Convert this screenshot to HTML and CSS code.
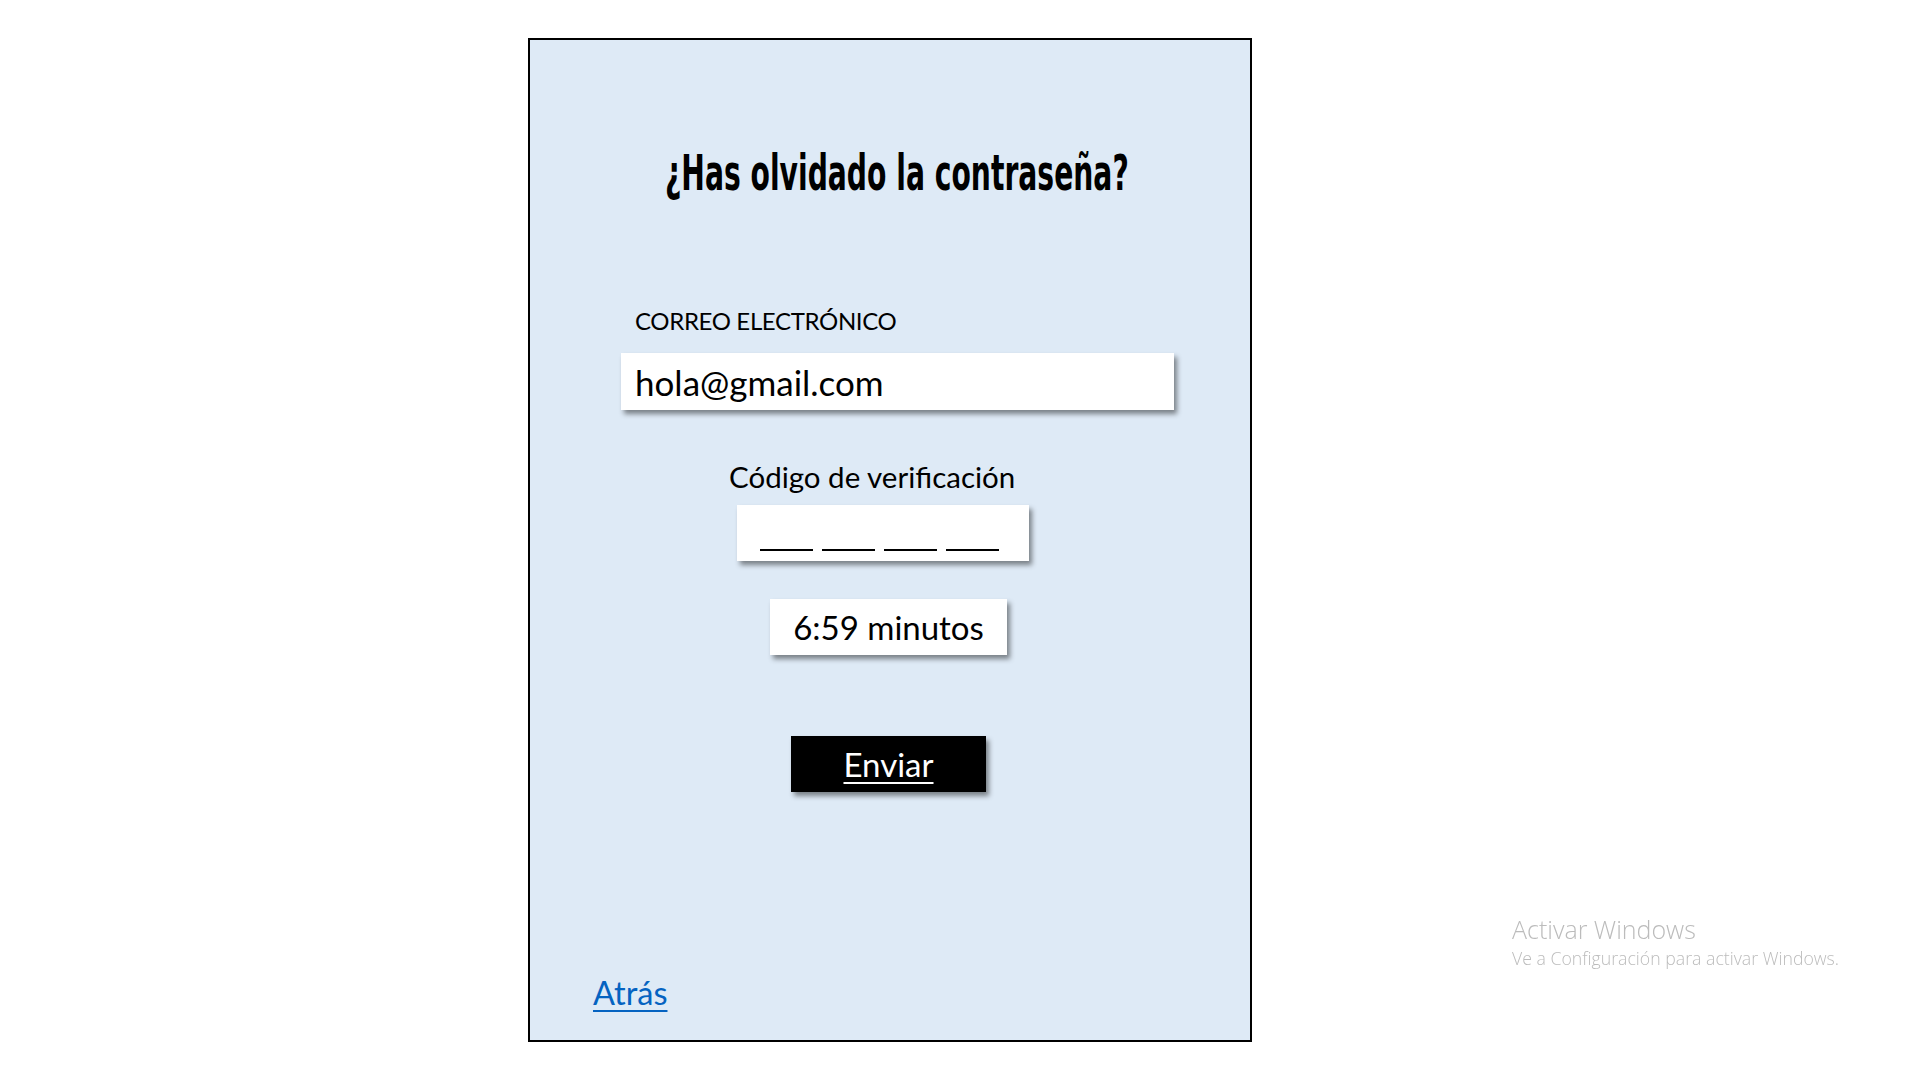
FILE: index.html
```html
<!DOCTYPE html>
<html lang="es">
<head>
<meta charset="utf-8">
<title>¿Has olvidado la contraseña?</title>
<link rel="stylesheet" href="styles.css">
</head>
<body>
<main class="panel">
  <h1 class="title"><span class="title-text">¿Has olvidado la contraseña?</span></h1>
  <label class="email-label">CORREO ELECTRÓNICO</label>
  <div class="email-input">hola@gmail.com</div>
  <div class="code-label">Código de verificación</div>
  <div class="code-box">
    <span class="slot"></span><span class="slot"></span><span class="slot"></span><span class="slot"></span>
  </div>
  <div class="timer">6:59 minutos</div>
  <button class="send"><span>Enviar</span></button>
  <a class="back" href="#">Atrás</a>
</main>
<div class="watermark">
  <div class="wm-title">Activar Windows</div>
  <div class="wm-sub">Ve a Configuración para activar Windows.</div>
</div>
</body>
</html>
```
FILE: styles.css
```css
html, body {
  margin: 0;
  padding: 0;
  background: #ffffff;
}
body {
  font-family: Lato, "Open Sans", sans-serif;
  color: #000;
  width: 1920px;
  height: 1080px;
  overflow: hidden;
}
.panel {
  box-sizing: border-box;
  width: 724px;
  height: 1004px;
  margin: 38px 0 0 528px;
  border: 2px solid #000;
  background: #deeaf6;
  display: flex;
  flex-direction: column;
  align-items: flex-start;
}
.title {
  margin: 104px 0 0 0;
  padding-left: 14px;
  box-sizing: border-box;
  width: 100%;
  display: flex;
  justify-content: center;
  height: 58px;
  line-height: 58px;
  font-family: "DejaVu Sans", sans-serif;
  font-stretch: condensed;
  font-weight: bold;
  font-size: 50px;
  white-space: nowrap;
}
.title-text {
  display: block;
  flex: none;
  transform: scaleX(0.627);
  transform-origin: center;
}
.email-label {
  margin: 104px 0 0 105px;
  font-size: 24px;
  letter-spacing: -0.35px;
  line-height: 30px;
  height: 30px;
}
.email-input {
  margin: 17px 0 0 91px;
  width: 553px;
  height: 57px;
  box-sizing: border-box;
  padding-left: 14px;
  background: #fff;
  display: flex;
  align-items: center;
  font-size: 35px;
  box-shadow: 3px 4px 5px rgba(0, 0, 0, 0.45);
}
.code-label {
  margin: 49px 0 0 199px;
  font-size: 29.5px;
  line-height: 36px;
  height: 36px;
}
.code-box {
  margin: 10px 0 0 207px;
  width: 292px;
  height: 56px;
  box-sizing: border-box;
  padding: 0 0 10px 23px;
  background: #fff;
  display: flex;
  align-items: flex-end;
  gap: 9px;
  box-shadow: 3px 4px 5px rgba(0, 0, 0, 0.45);
}
.slot {
  display: block;
  width: 53px;
  height: 0;
  border-bottom: 2px solid #000;
}
.timer {
  margin: 38px 0 0 240px;
  width: 237px;
  height: 56px;
  background: #fff;
  display: flex;
  align-items: center;
  justify-content: center;
  font-size: 33px;
  box-shadow: 3px 4px 5px rgba(0, 0, 0, 0.45);
}
.send {
  margin: 81px 0 0 261px;
  width: 195px;
  height: 56px;
  padding: 0;
  border: 0;
  background: #000;
  color: #fff;
  font-family: Lato, "Open Sans", sans-serif;
  font-size: 33px;
  text-decoration: underline;
  text-underline-offset: 5px;
  text-decoration-thickness: 2px;
  box-shadow: 3px 4px 5px rgba(0, 0, 0, 0.45);
  display: flex;
  align-items: center;
  justify-content: center;
}
.back {
  margin: auto 0 27px 63px;
  font-size: 32.5px;
  line-height: 40px;
  color: #0563c1;
  text-decoration: underline;
  text-underline-offset: 5px;
  text-decoration-thickness: 2px;
}
.watermark {
  position: fixed;
  left: 1512px;
  top: 912px;
  color: #bcbcbc;
  font-family: "Open Sans", sans-serif;
}
.wm-title {
  font-size: 25px;
  line-height: 34px;
  font-weight: 300;
}
.wm-sub {
  font-size: 17.7px;
  line-height: 24px;
  font-weight: 300;
}
```
